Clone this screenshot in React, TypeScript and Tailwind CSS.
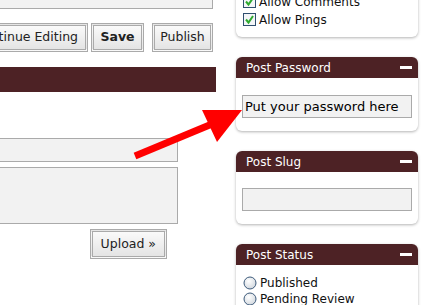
import React from 'react';

const Check = () => (
  <svg width="13" height="13" viewBox="0 0 13 13" className="shrink-0">
    <rect x="0.5" y="0.5" width="12" height="12" fill="#f4f6f8" stroke="#2f4f6f" />
    <path d="M3 6.5 L5.5 9.5 L10 3" fill="none" stroke="#2eaa2e" strokeWidth="2" />
  </svg>
);

const Radio = () => (
  <svg width="14" height="14" viewBox="0 0 14 14" className="shrink-0">
    <defs>
      <radialGradient id="rg" cx="0.4" cy="0.35" r="0.7">
        <stop offset="0" stopColor="#ffffff" />
        <stop offset="1" stopColor="#cfd6dd" />
      </radialGradient>
    </defs>
    <circle cx="7" cy="7" r="6" fill="url(#rg)" stroke="#3d5a7a" strokeWidth="1" />
  </svg>
);

const Box: React.FC<{ title: string; children: React.ReactNode }> = ({ title, children }) => (
  <div className="bg-white rounded-[6px] shadow-[0_1px_3px_rgba(0,0,0,0.3)] overflow-hidden">
    <div className="h-[21px] bg-[#4d2225] flex items-center justify-between pl-[10px] pr-[6px] text-white text-[12px]">
      <span>{title}</span>
      <span className="w-[12px] h-[3px] bg-white" />
    </div>
    {children}
  </div>
);

const btn =
  'h-[29px] px-[7px] border-[3px] border-double border-[#aaaaaa] bg-gradient-to-b from-[#fafafa] to-[#e4e4e4] text-[12.5px] text-[#222] flex items-center justify-center shrink-0';

export default function App() {
  return (
    <div className="relative w-[435px] h-[305px] overflow-hidden bg-white font-['DejaVu_Sans',sans-serif]">
      <div className="flex gap-[20px]">
        <div className="w-[216px] shrink-0 overflow-hidden">
          <div className="h-[9px] mr-[3px] border-b border-r border-[#aaaaaa] bg-[#f2f2f2]" />
          <div className="mt-[14px] flex justify-end pr-[3px]">
            <div className={btn}>Continue Editing</div>
            <div className={btn + ' ml-[3px] w-[53px] font-bold'}>Save</div>
            <div className={btn + ' ml-[8px] w-[61px]'}>Publish</div>
          </div>
          <div className="mt-[15px] h-[25px] bg-[#4d2225]" />
          <div className="mt-[46px] mr-[38px] h-[24px] border border-l-0 border-[#aaaaaa] bg-[#f2f2f2]" />
          <div className="mt-[5px] mr-[38px] h-[57px] border border-l-0 border-[#aaaaaa] bg-[#f2f2f2]" />
          <div className="mt-[5px] flex justify-end pr-[49px]">
            <div className={btn + ' h-[30px] px-[8px]'}>Upload »</div>
          </div>
        </div>

        <div className="w-[182px] shrink-0 flex flex-col gap-[20px] text-[12px] text-[#111]">
          <div className="-mt-[13px] bg-white rounded-b-[6px] shadow-[0_1px_3px_rgba(0,0,0,0.3)] px-[7px] pb-[11px] pt-[8px] flex flex-col gap-[5px]">
            <div className="flex items-center gap-[3px] h-[13px]">
              <Check />
              <span className="leading-none">Allow Comments</span>
            </div>
            <div className="flex items-center gap-[3px] h-[13px]">
              <Check />
              <span className="leading-none">Allow Pings</span>
            </div>
          </div>

          <Box title="Post Password">
            <div className="px-[6px] pt-[17px] pb-[13px]">
              <div className="h-[23px] border border-[#aaaaaa] bg-[#f2f2f2] flex items-center pl-[2px] text-[13px] text-black">
                Put your password here
              </div>
            </div>
          </Box>

          <Box title="Post Slug">
            <div className="px-[6px] pt-[16px] pb-[13px]">
              <div className="h-[23px] border border-[#aaaaaa] bg-[#f2f2f2]" />
            </div>
          </Box>

          <Box title="Post Status">
            <div className="px-[7px] pt-[11px] pb-[10px] flex flex-col gap-[2px]">
              <div className="flex items-center gap-[3px] h-[14px]">
                <Radio />
                <span>Published</span>
              </div>
              <div className="flex items-center gap-[3px] h-[14px]">
                <Radio />
                <span>Pending Review</span>
              </div>
            </div>
          </Box>
        </div>
      </div>

      <svg className="absolute left-0 top-0 pointer-events-none" width="435" height="305" viewBox="0 0 435 305">
        <line x1="135" y1="156" x2="212" y2="124" stroke="#ff0000" strokeWidth="7" strokeLinecap="butt" />
        <polygon points="242,110 202,110 217,142" fill="#ff0000" />
      </svg>
    </div>
  );
}
